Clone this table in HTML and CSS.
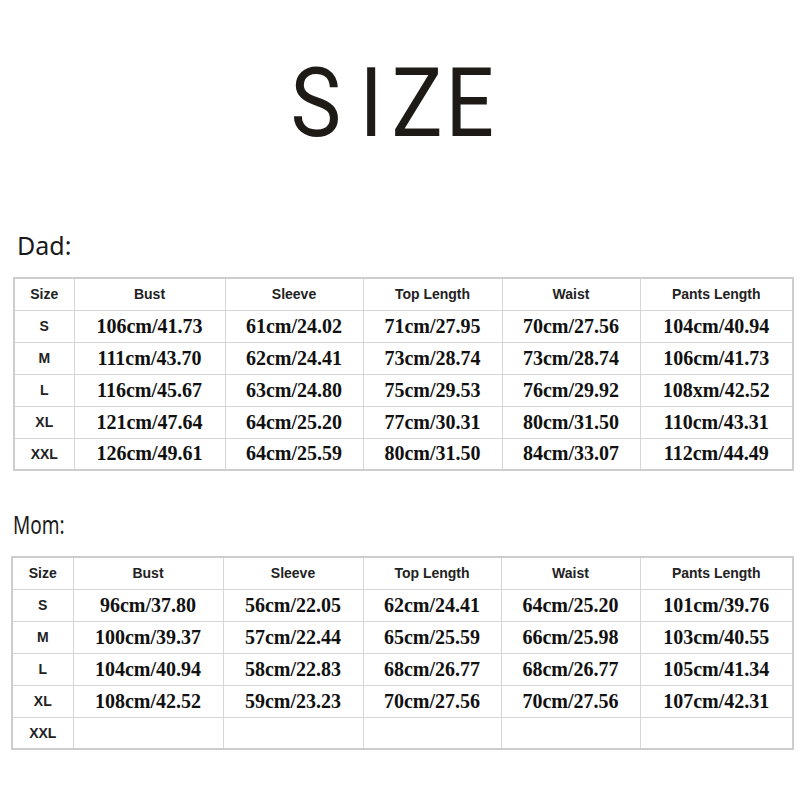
FILE: index.html
```html
<!DOCTYPE html>
<html>
<head>
<meta charset="utf-8">
<link rel="stylesheet" href="styles.css">
</head>
<body>
<h1 class="title"><span class="t-s">S</span><span class="t-i">I</span><span class="t-z">Z</span><span class="t-e">E</span></h1>

<div class="label label-dad">Dad:</div>
<table class="size-table dad">
  <colgroup>
    <col class="c-size"><col class="c-bust"><col class="c-sleeve"><col class="c-top"><col class="c-waist"><col class="c-pants">
  </colgroup>
  <tr class="head"><th>Size</th><th>Bust</th><th>Sleeve</th><th>Top Length</th><th>Waist</th><th>Pants Length</th></tr>
  <tr><th>S</th><td>106cm/41.73</td><td>61cm/24.02</td><td>71cm/27.95</td><td>70cm/27.56</td><td>104cm/40.94</td></tr>
  <tr><th>M</th><td>111cm/43.70</td><td>62cm/24.41</td><td>73cm/28.74</td><td>73cm/28.74</td><td>106cm/41.73</td></tr>
  <tr><th>L</th><td>116cm/45.67</td><td>63cm/24.80</td><td>75cm/29.53</td><td>76cm/29.92</td><td>108xm/42.52</td></tr>
  <tr><th>XL</th><td>121cm/47.64</td><td>64cm/25.20</td><td>77cm/30.31</td><td>80cm/31.50</td><td>110cm/43.31</td></tr>
  <tr><th>XXL</th><td>126cm/49.61</td><td>64cm/25.59</td><td>80cm/31.50</td><td>84cm/33.07</td><td>112cm/44.49</td></tr>
</table>

<div class="label label-mom">Mom:</div>
<table class="size-table mom">
  <colgroup>
    <col class="c-size"><col class="c-bust"><col class="c-sleeve"><col class="c-top"><col class="c-waist"><col class="c-pants">
  </colgroup>
  <tr class="head"><th>Size</th><th>Bust</th><th>Sleeve</th><th>Top Length</th><th>Waist</th><th>Pants Length</th></tr>
  <tr><th>S</th><td>96cm/37.80</td><td>56cm/22.05</td><td>62cm/24.41</td><td>64cm/25.20</td><td>101cm/39.76</td></tr>
  <tr><th>M</th><td>100cm/39.37</td><td>57cm/22.44</td><td>65cm/25.59</td><td>66cm/25.98</td><td>103cm/40.55</td></tr>
  <tr><th>L</th><td>104cm/40.94</td><td>58cm/22.83</td><td>68cm/26.77</td><td>68cm/26.77</td><td>105cm/41.34</td></tr>
  <tr><th>XL</th><td>108cm/42.52</td><td>59cm/23.23</td><td>70cm/27.56</td><td>70cm/27.56</td><td>107cm/42.31</td></tr>
  <tr><th>XXL</th><td></td><td></td><td></td><td></td><td></td></tr>
</table>
</body>
</html>
```

FILE: styles.css
```css
html, body {
  margin: 0;
  padding: 0;
  background: #ffffff;
}

body {
  width: 800px;
  height: 800px;
  overflow: hidden;
}

.title {
  margin: 55px 0 0 0;
  padding-left: 330px;
  height: 97px;
  font-family: Roboto, "Liberation Sans", sans-serif;
  font-weight: 400;
  font-size: 97px;
  line-height: 97px;
  text-align: left;
  white-space: nowrap;
  color: #1e1a16;
  transform: scaleX(0.88);
  transform-origin: 0 0;
}

.t-s { letter-spacing: 21px; }
.t-i { letter-spacing: 10px; }
.t-z { letter-spacing: 3px; }
.t-e { letter-spacing: 0; }

.label {
  font-family: "Noto Sans", "Noto Sans CJK SC", sans-serif;
  font-size: 25px;
  line-height: 30px;
  height: 30px;
  color: #1a1a1a;
  transform-origin: 0 0;
}

.label-dad {
  margin: 78px 0 0 17px;
}

.label-mom {
  margin: 38px 0 0 13px;
  transform: scaleX(0.76);
}

.size-table {
  border-collapse: collapse;
  table-layout: fixed;
  border: 2px solid #cdcdcd;
  margin-top: 17px;
}

.size-table.dad {
  margin-left: 13px;
  width: 779px;
}

.size-table.mom {
  margin-left: 11px;
  width: 781px;
}

.c-size { width: 60px; }
.c-bust { width: 151px; }
.c-sleeve { width: 138px; }
.c-top { width: 139px; }
.c-waist { width: 138px; }
.c-pants { width: 153px; }

.mom .c-size { width: 61px; }
.mom .c-bust { width: 150px; }
.mom .c-sleeve { width: 140px; }
.mom .c-top { width: 138px; }
.mom .c-waist { width: 139px; }

.size-table tr {
  height: 32px;
}

.size-table th,
.size-table td {
  border: 1px solid #d6d6d6;
  padding: 0;
  text-align: center;
  vertical-align: middle;
  white-space: nowrap;
}

.size-table th {
  font-family: "Liberation Sans", Arial, sans-serif;
  font-weight: 700;
  font-size: 14px;
  color: #222222;
}

.size-table td {
  font-family: "Liberation Serif", "Times New Roman", serif;
  font-weight: 700;
  font-size: 20px;
  color: #111111;
}
```
